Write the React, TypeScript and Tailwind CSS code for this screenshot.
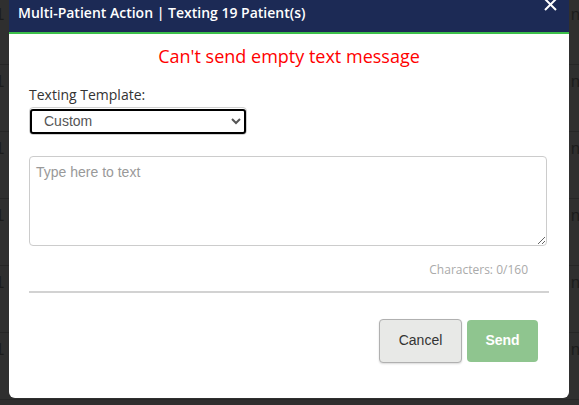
import React, { useState } from "react";

const rows: number[] = [0, 1, 2, 3, 4, 5, 6];

const App: React.FC = () => {
  const [template, setTemplate] = useState("Custom");
  const [text, setText] = useState("");

  return (
    <div className="relative h-[405px] w-[579px] overflow-hidden bg-[#2f2f2f] font-['Open_Sans',sans-serif]">
      {/* table behind the overlay */}
      <div className="mt-[-2px] flex flex-col">
        {rows.map((r) => (
          <div
            key={r}
            className="flex h-[67px] justify-between border-b border-[#262626] pt-[7px] text-[17px] leading-[20px] text-[#1c1c1c] font-['Liberation_Sans',sans-serif]"
          >
            <span className="ml-[-5px]">1</span>
            <span className="mr-[-6px]">nt</span>
          </div>
        ))}
      </div>

      {/* modal */}
      <div className="absolute left-[9px] top-[-8px] w-[560px] overflow-hidden rounded-b-[6px] bg-white">
        <div className="relative flex h-[40px] items-center bg-[#1c2a55] px-[9px]">
          <div className="text-[14px] font-semibold text-white">
            Multi-Patient Action | Texting 19 Patient(s)
          </div>
          <button className="absolute right-[12px] top-[6px] text-white">
            <svg width="13" height="13" viewBox="0 0 13 13">
              <path d="M1 1 L12 12 M12 1 L1 12" stroke="white" strokeWidth="2" />
            </svg>
          </button>
        </div>
        <div className="h-[2px] bg-[#3cbf4a]" />

        <div className="px-[20px] pb-[35px]">
          <div className="pt-[10px] text-center text-[18px] leading-[24px] text-[#ff0000]">
            Can't send empty text message
          </div>

          <div className="mt-[17px] text-[14px] leading-[19px] text-[#333]">
            Texting Template:
          </div>
          <div className="mt-[3px] w-[218px] rounded-[4px] border border-[#d0d0d0] p-0">
            <select
              value={template}
              onChange={(e) => setTemplate(e.target.value)}
              className="h-[25px] w-full rounded-[3px] border-2 border-black bg-white pl-[8px] text-[14px] text-[#555] outline-none font-['Liberation_Sans',sans-serif]"
            >
              <option>Custom</option>
            </select>
          </div>

          <textarea
            value={text}
            onChange={(e) => setText(e.target.value)}
            placeholder="Type here to text"
            className="mt-[21px] block h-[90px] w-[518px] rounded-[4px] border border-[#cccccc] px-[6px] py-[5px] text-[14px] text-[#555] outline-none placeholder:text-[#999] font-['Liberation_Sans',sans-serif]"
          />

          <div className="mt-[16px] pr-[21px] text-right text-[12px] leading-[16px] text-[#aaa]">
            Characters: {text.length}/160
          </div>

          <div className="mt-[13px] h-[2px] bg-[#d2d2d2]" />

          <div className="mt-[26px] mr-[11px] flex items-center justify-end gap-[5px] font-['Liberation_Sans',sans-serif]">
            <button className="h-[44px] w-[83px] rounded-[4px] border border-[#b0b0b0] bg-[#e8e9e7] text-[14px] text-[#333] shadow-[0_1px_2px_rgba(0,0,0,0.15)]">
              Cancel
            </button>
            <button className="h-[42px] w-[71px] rounded-[4px] bg-[#8fc58f] text-[14px] font-bold text-white">
              Send
            </button>
          </div>
        </div>
      </div>
    </div>
  );
};

export default App;
